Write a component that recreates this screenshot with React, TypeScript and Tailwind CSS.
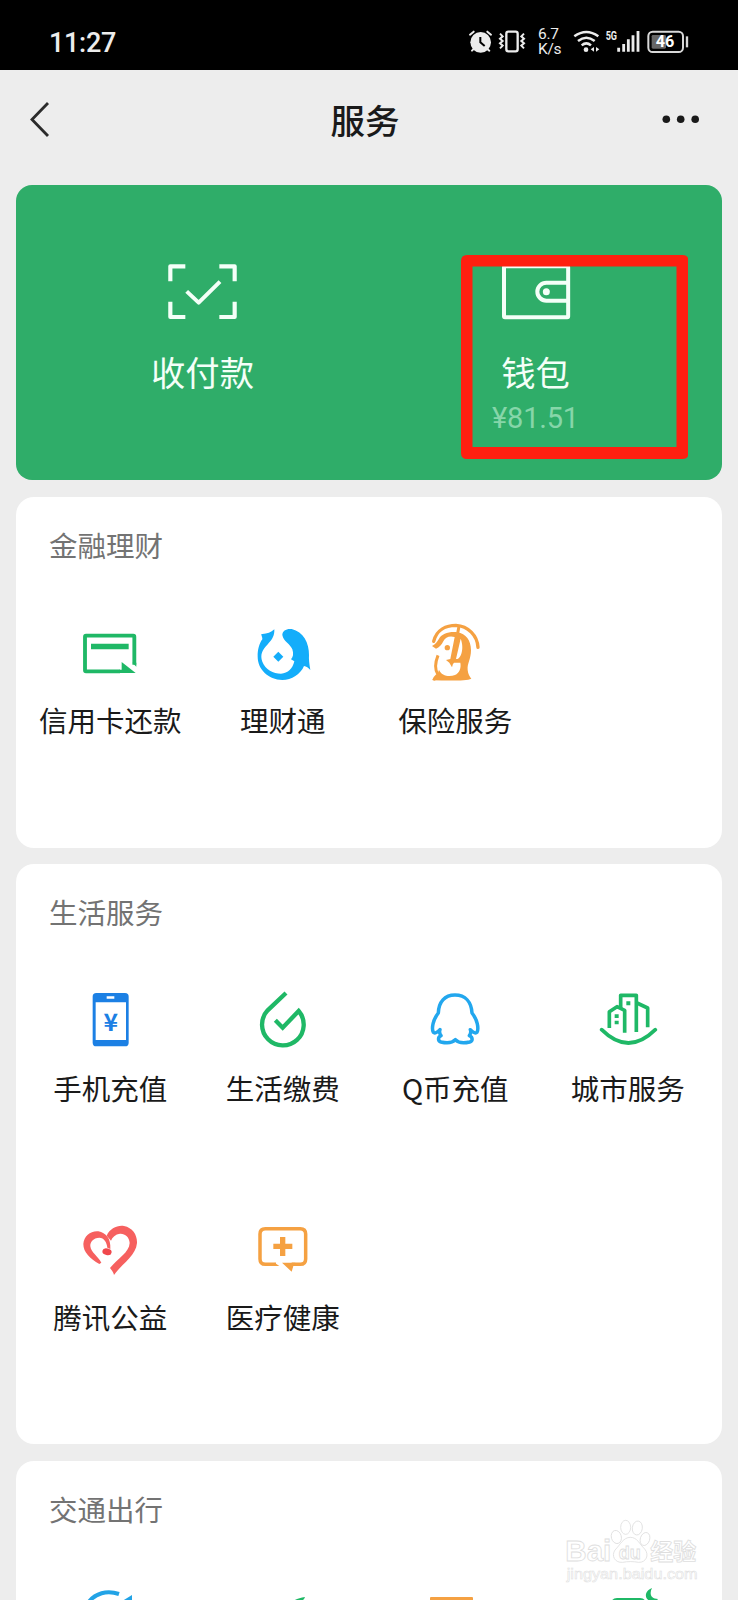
import type { ReactNode } from 'react'

const GREEN = '#1fb866'
const ORANGE = '#f5a142'

/* 状态栏 */
function StatusBar() {
  return (
    <div className="flex h-[69.5px] items-center justify-between bg-black pl-[49px] pr-[47px] pt-[14px] text-[#ececec]">
      <span className="mt-[3px] font-[Roboto] text-[27px] font-medium leading-none tracking-[-0.3px]">11:27</span>
      <div className="flex items-center">
        <svg width="25" height="25" viewBox="84 88 75 75" fill="none" stroke="#ececec">
          <circle cx="122" cy="128" r="31" fill="#ececec" stroke="none" />
          <path d="M90 105 L101 96 M153 105 L142 96" strokeWidth="6" strokeLinecap="round" />
          <path d="M102 147 L96 153 M141 147 L148 153" strokeWidth="6" strokeLinecap="round" />
          <path d="M121 112 V128 L134 139" stroke="#000" strokeWidth="6" />
        </svg>
        <svg className="ml-[5px]" width="28" height="25" viewBox="174 88 84 75" fill="none" stroke="#ececec">
          <rect x="199" y="96" width="34" height="59" rx="6" strokeWidth="7" />
          <path d="M180 102 L188 110 L180 117 L188 124 L180 131 L188 138 L180 146" strokeWidth="6" />
          <path d="M252 102 L244 110 L252 117 L244 124 L252 131 L244 138 L252 146" strokeWidth="6" />
        </svg>
        <div className="ml-3 w-[25px] font-[Roboto] text-[15.5px] leading-[15px] tracking-[-0.3px]">
          <div>6.7</div>
          <div>K/s</div>
        </div>
        <svg className="ml-[10px]" width="28" height="25" viewBox="400 88 84 75" fill="none" stroke="#ececec">
          <path d="M404 110 Q440 84 476 110" strokeWidth="7.500" />
          <path d="M415 124 Q440 104 465 124" strokeWidth="7.500" />
          <path d="M426 137 Q440 125 454 137" strokeWidth="7.500" />
          <circle cx="439" cy="150" r="7" fill="#ececec" stroke="none" />
          <path d="M463 142 V156 L453 149Z M469 142 V156 L479 149Z" fill="#ececec" stroke="none" />
        </svg>
        <svg className="ml-1" width="36" height="25" viewBox="495 88 108 75">
          <text x="497" y="122" fontFamily="Roboto" fontWeight="700" fontSize="38" textLength="34" lengthAdjust="spacingAndGlyphs" fill="#ececec">5G</text>
          <path d="M536 144 V156 M551 133 V156 M565 119 V156 M579 107 V156 M594 94 V156" stroke="#ececec" strokeWidth="8.500" />
        </svg>
        <svg className="ml-[5px]" width="45" height="25" viewBox="618 88 135 75">
          <rect x="625" y="96" width="104" height="61" rx="13" fill="none" stroke="#d8d8d8" strokeWidth="6" />
          <rect x="635" y="106" width="43" height="41" rx="4" fill="#666" />
          <path d="M741 110 V143" stroke="#d8d8d8" strokeWidth="7" />
          <text x="647" y="143" fontFamily="Roboto" fontWeight="700" fontSize="49" textLength="56" lengthAdjust="spacingAndGlyphs" fill="#fff">46</text>
        </svg>
      </div>
    </div>
  )
}

function NavBar() {
  return (
    <header className="flex h-[115.5px] items-start justify-between pl-[28px] pr-[38px] pt-8 text-[#1a1a1a]">
      <svg width="22" height="36" viewBox="0 0 22 36" fill="none" stroke="#2b2b2b" strokeWidth="2.8">
        <path d="M20 1 L4 17.5 L20 34" />
      </svg>
      <h1 className="ml-[18px] text-[34.5px] font-medium leading-[34px]">服务</h1>
      <svg width="38" height="36" viewBox="0 0 38 36" fill="#1a1a1a">
        <circle cx="4.3" cy="17.3" r="3.8" />
        <circle cx="18.700" cy="17.3" r="3.8" />
        <circle cx="33.2" cy="17.3" r="3.8" />
      </svg>
    </header>
  )
}

function PayCard() {
  return (
    <section className="relative grid h-[295px] grid-cols-2 rounded-2xl bg-[#2fad69] px-5 pt-[74px] text-[#f4fff8]">
      <div className="flex flex-col items-center">
        <svg width="76" height="64" viewBox="104 56 228 192" fill="none" stroke="#f4fff8" strokeWidth="12.500">
          <path d="M120 123 V78 H165 M267 78 H313 V123 M313 184 V230 H267 M165 230 H120 V184" strokeLinejoin="round" />
          <path d="M169 153 L205 187 L269 124" strokeWidth="12" strokeLinejoin="round" />
        </svg>
        <span className="mt-[28px] text-[34.3px] leading-[40px]">收付款</span>
      </div>
      <div className="flex flex-col items-center">
        <svg width="76" height="64" viewBox="173 56 228 192" fill="none" stroke="#f4fff8" strokeWidth="12">
          <rect x="191" y="78" width="192.500" height="153" rx="3" />
          <path d="M383 127 H318 A27 27 0 0 0 318 181 H383" />
          <circle cx="318" cy="154" r="10.500" fill="#f4fff8" stroke="none" />
        </svg>
        <span className="mt-[28px] text-[34.3px] leading-[40px]">钱包</span>
        <span className="mt-[11px] font-[Roboto] text-[29px] leading-[32px] tracking-[-0.2px] text-[#86d6a9]">¥81.51</span>
      </div>
      {/* 钱包高亮框 */}
      <svg className="absolute left-[444.500px] top-[70px]" width="227.500" height="204" viewBox="0 0 227.500 204">
        <path fillRule="evenodd" fill="#ff1f10" d="M6 0 H221.500 Q227.500 0 227.500 6 V198 Q227.500 204 221.500 204 H6 Q0 204 0 198 V6 Q0 0 6 0Z M11.500 11.500 V192 H215.500 V11.500Z" />
      </svg>
    </section>
  )
}

function Icon({ box, children }: { box: string; children: ReactNode }) {
  return (
    <svg width="64" height="64" viewBox={box} fill="none">
      {children}
    </svg>
  )
}

const CreditCardIcon = () => (
  <Icon box="144 303 192 192">
    <path d="M270 454 H168 Q165 454 165 451 V350 Q165 347 168 347 H310 Q313 347 313 350 V434" stroke={GREEN} strokeWidth="11.500" />
    <path d="M183 371 H296 V388 H183Z M275 426 L317 459 H268 V449 H275Z" fill={GREEN} />
    <path d="M307 428 L319 440 V428Z" fill={GREEN} />
  </Icon>
)

const FishIcon = () => (
  <Icon box="663 303 192 192">
    <path
      fill="#14adfa"
      d="M757 345 C757 332 770 325 785 327 C820 335 838 370 837 405 C836 418 838 432 841 450 C835 443 829 440 822 438 C812 462 785 480 757 480 C715 478 683 448 683 410 C682 390 688 370 697 358 C698 352 694 348 694 342 C710 343 722 337 733 328 C734 345 728 358 712 374 C696 390 690 405 697 425 C706 449 730 461 753 461 C774 460 788 446 793 424 L783 418 C790 411 791 400 787 388 C781 372 760 364 757 345Z"
    />
    <path d="M745 395 L760 410 L745 425 L730 410Z" fill="#14adfa" />
  </Icon>
)

const InsuranceIcon = () => (
  <Icon box="159 63 192 192">
    <path d="M191 124 C200 88 230 76 258 76 C294 78 322 106 324 142" stroke={ORANGE} strokeWidth="10" strokeLinecap="round" />
    <path d="M191 241 C193 233 199 229 204 224 C193 208 196 186 204 166" stroke={ORANGE} strokeWidth="9" strokeLinejoin="round" />
    <path
      fill={ORANGE}
      fillRule="evenodd"
      d="M186 138 C197 132 202 124 207 116 C216 102 236 94 262 97 C288 101 303 122 303 150 C303 178 291 190 293 210 C294 222 299 230 304 236 C290 243 240 242 189 241 L203 223 L207 209 C214 228 238 232 255 225 C268 219 274 204 271 188 H250 L246 202 L238 188 L228 180 L241 177 L254 111 C238 106 226 112 220 124 C215 135 208 142 198 146Z M272 116 L258 177 C272 180 284 146 272 116Z"
    />
    <circle cx="232" cy="143" r="8" fill={ORANGE} />
    <path d="M267 78 L247 190" stroke={ORANGE} strokeWidth="9" />
  </Icon>
)

const PhoneIcon = () => (
  <Icon box="144 327 192 192">
    <rect x="188" y="342" width="108" height="160" rx="11" fill="#1c80e4" />
    <path d="M197 370 H288 V483 H197Z M230 352 H253 V359 H230Z" fill="#fff" />
    <text x="242.500" y="456" textAnchor="middle" fontFamily="Noto Sans CJK SC" fontWeight="700" fontSize="74" fill="#1c80e4">¥</text>
  </Icon>
)

const DropIcon = () => (
  <Icon box="663 327 192 192">
    <path d="M768 342 L713 394 A62.500 62.500 0 1 0 806 396 L758 446 L736 424" stroke={GREEN} strokeWidth="13" />
  </Icon>
)

const QQIcon = () => (
  <Icon box="130 57 192 192">
    <path
      stroke="#22a7ee"
      strokeWidth="10.500"
      strokeLinejoin="round"
      d="M226 78 C195 78 177 99 176 132 C160 152 155 178 161 190 C165 194 174 190 181 182 C178 190 180 195 184 200 C174 205 174 216 184 219 C200 223 218 222 227 212 C236 222 254 223 270 219 C280 216 280 205 269 200 C273 195 275 190 272 182 C279 190 288 194 292 190 C298 178 293 152 277 132 C275 99 257 78 226 78Z"
    />
  </Icon>
)

const CityIcon = () => (
  <Icon box="645 57 192 192">
    <g stroke={GREEN} strokeWidth="11">
      <path d="M662 182 Q742 262 823 182" strokeLinecap="round" />
      <path d="M685 177 V128 L708 113 L731 124 V191" strokeLinejoin="round" />
      <path d="M719 118 V79 H766 V189" strokeLinejoin="round" />
      <path d="M768 102 L800 117 V175" strokeLinejoin="round" />
    </g>
    <path d="M736 97 H748 V109 H736Z M701 136 H713 V147 H701Z M701 155 H713 V166 H701Z" fill={GREEN} />
  </Icon>
)

const HeartIcon = () => (
  <Icon box="144 24 192 192">
    <path
      fill="#f6605f"
      d="M214 161 L208 165 C180 149 160 130 160 105 C162 80 182 65 205 67 C228 72 243 88 241 120 L232 116 C230 98 222 87 208 86 C190 87 180 98 181 112 C183 130 204 142 214 161Z"
    />
    <path
      fill="#f6605f"
      d="M230 80 C240 58 262 48 282 51 C308 56 322 78 321 102 C318 140 275 165 252 198 C250 188 243 182 240 177 C262 150 298 130 299 102 C298 84 285 73 270 74 C256 76 247 84 243 95Z"
    />
    <ellipse cx="231" cy="128" rx="14" ry="10" transform="rotate(12 231 128)" fill="#f0484c" />
  </Icon>
)

const MedicalIcon = () => (
  <Icon box="663 24 192 192">
    <path d="M738 166 H706 Q690 166 690 150 V75 Q690 59 706 59 H811 Q827 59 827 75 V150 Q827 166 811 166 H785" stroke={ORANGE} strokeWidth="10.500" />
    <path d="M734 161 L748 171 H734Z M756 161 H796 L790 171 L785 188Z" fill={ORANGE} />
    <path d="M758 84 V141 M730 112 H787" stroke={ORANGE} strokeWidth="16" />
  </Icon>
)

const RideIcon = () => (
  <Icon box="78 1584 64 64">
    <path d="M88 1602 C95 1592 107 1589 119 1593" stroke="#22a3e6" strokeWidth="4" />
    <path d="M132 1594 L119 1602 H132Z" fill="#22a3e6" />
  </Icon>
)

const LeafIcon = () => (
  <Icon box="251 1584 64 64">
    <path d="M291 1602 C295 1598 299 1597 305 1596 C304 1599 302 1600 298 1602Z M282 1600 L288 1599 V1602Z" fill={GREEN} />
  </Icon>
)

const TrainIcon = () => (
  <Icon box="423 1584 64 64">
    <path d="M430 1597 Q430 1596 431 1596 H472 Q473 1596 473 1597 V1630 H430Z" fill={ORANGE} />
  </Icon>
)

const HotelIcon = () => (
  <Icon box="595 1584 64 64">
    <path d="M610 1602 Q611 1597 616 1597 H639 Q644 1597 645 1602Z" fill={GREEN} />
    <path d="M651 1587 C643 1590 643 1599 650 1600 Q655 1601 657 1598 C650 1598 648 1593 651 1587Z" fill={GREEN} />
  </Icon>
)

interface Item {
  label: string
  icon: ReactNode
}

const finance: Item[] = [
  { label: '信用卡还款', icon: <CreditCardIcon /> },
  { label: '理财通', icon: <FishIcon /> },
  { label: '保险服务', icon: <InsuranceIcon /> },
]

const life: Item[] = [
  { label: '手机充值', icon: <PhoneIcon /> },
  { label: '生活缴费', icon: <DropIcon /> },
  { label: 'Q币充值', icon: <QQIcon /> },
  { label: '城市服务', icon: <CityIcon /> },
  { label: '腾讯公益', icon: <HeartIcon /> },
  { label: '医疗健康', icon: <MedicalIcon /> },
]

const travel: Item[] = [
  { label: '', icon: <RideIcon /> },
  { label: '', icon: <LeafIcon /> },
  { label: '', icon: <TrainIcon /> },
  { label: '', icon: <HotelIcon /> },
]

function Section({ title, items }: { title: string; items: Item[] }) {
  return (
    <section className="rounded-[18px] bg-white px-2 pt-[31px]">
      <h2 className="pl-[25px] text-[28.5px] leading-[34px] text-[#737373]">{title}</h2>
      <div className="mt-[59px] grid grid-cols-4 gap-y-[2px]">
        {items.map((item, i) => (
          <div key={i} className="flex h-[227px] flex-col items-center">
            {item.icon}
            <span className="mt-[18.5px] whitespace-nowrap text-[28.5px] leading-[34px] text-[#1a1a1a]">{item.label}</span>
          </div>
        ))}
      </div>
    </section>
  )
}

function Watermark() {
  return (
    <svg className="absolute left-[560px] top-[1515px]" width="145" height="72" viewBox="60 45 435 216">
      <g fill="#fff" stroke="#dedede" strokeWidth="2.500">
        <text x="76" y="184" fontFamily="Liberation Sans" fontWeight="700" fontSize="88" textLength="138" lengthAdjust="spacingAndGlyphs">Bai</text>
        <ellipse cx="229" cy="111" rx="15" ry="20" transform="rotate(-15 229 111)" />
        <ellipse cx="257" cy="82" rx="15" ry="21" />
        <ellipse cx="292" cy="84" rx="15" ry="21" transform="rotate(8 292 84)" />
        <ellipse cx="315" cy="117" rx="14" ry="20" transform="rotate(18 315 117)" />
        <path d="M271 112 C292 112 298 132 314 147 C329 165 318 188 296 187 C280 184 264 184 248 187 C225 189 213 168 225 150 C241 134 250 112 271 112Z" />
        <text x="236" y="178" fontFamily="Liberation Sans" fontWeight="700" fontSize="56" textLength="66" lengthAdjust="spacingAndGlyphs">du</text>
        <text x="331" y="181" fontFamily="Noto Sans CJK SC" fontWeight="700" fontSize="69" textLength="138">经验</text>
        <text x="80" y="236" fontFamily="Liberation Sans" fontSize="42" strokeWidth="1.500" textLength="393" lengthAdjust="spacingAndGlyphs">jingyan.baidu.com</text>
      </g>
    </svg>
  )
}

export default function App() {
  return (
    <div className="relative h-[1600px] w-[738px] overflow-hidden bg-[#ededed] font-['Noto_Sans_CJK_SC',sans-serif]">
      <StatusBar />
      <NavBar />
      <main className="flex flex-col gap-[16.5px] px-4">
        <PayCard />
        <Section title="金融理财" items={finance} />
        <Section title="生活服务" items={life} />
        <Section title="交通出行" items={travel} />
      </main>
      <Watermark />
    </div>
  )
}
